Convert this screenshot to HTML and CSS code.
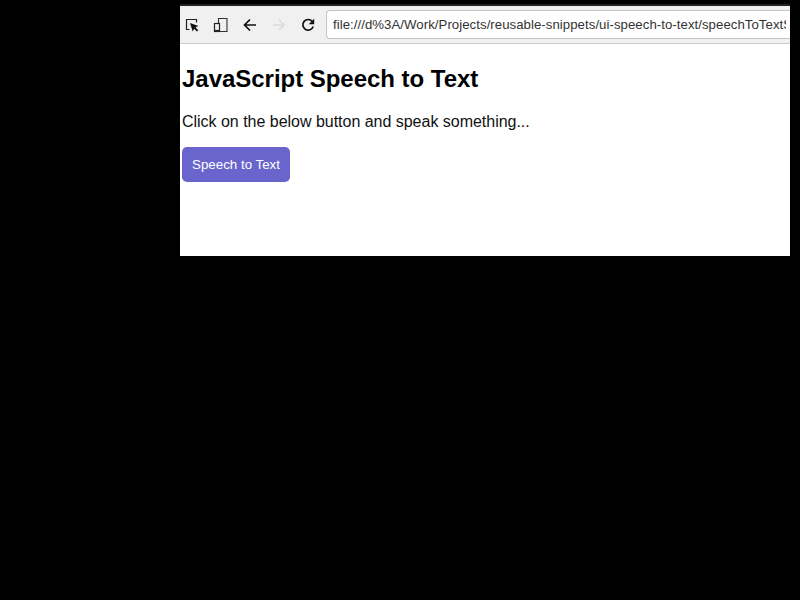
FILE: index.html
```html
<!DOCTYPE html>
<html lang="en">
<head>
<meta charset="utf-8">
<title>JavaScript Speech to Text</title>
<link rel="stylesheet" href="styles.css">
</head>
<body>
<div class="window">
  <header class="toolbar">
    <svg class="icon" viewBox="0 0 16 16"><path d="M5.500 12.500H2.500v-10h10v3" fill="none" stroke="#222" stroke-width="1.200"/><path d="M6 6l8.500 3-3 1.300 2.700 3-1.200 1.200-2.900-2.700-1.400 2.700z" fill="#111"/></svg>
    <svg class="icon" viewBox="0 0 16 16"><path d="M5.500 6V1.500h8.500v13H7" fill="none" stroke="#333" stroke-width="1.100"/><rect x="1.500" y="6.500" width="5" height="8" fill="none" stroke="#222" stroke-width="1.200"/><path d="M1 13.500h6" stroke="#222" stroke-width="1.200"/></svg>
    <svg class="icon" viewBox="0 0 16 16"><path d="M14 8H3M8 2.500L2.500 8L8 13.500" fill="none" stroke="#111" stroke-width="1.700"/></svg>
    <svg class="icon" viewBox="0 0 16 16"><path d="M2 8h11M8 3L13 8L8 13" fill="none" stroke="#dadada" stroke-width="1.600"/></svg>
    <svg class="icon" viewBox="0 0 16 16"><path d="M12.300 4.500A5.300 5.300 0 1 0 13.200 9.500" fill="none" stroke="#111" stroke-width="1.700"/><path d="M14.200 1.800v5.500H8.700z" fill="#111"/></svg>
    <div class="address"><span class="url">file:///d%3A/Work/Projects/reusable-snippets/ui-speech-to-text/speechToTextS</span></div>
  </header>
  <main class="page">
    <h1>JavaScript Speech to Text</h1>
    <p>Click on the below button and speak something...</p>
    <button class="speak" type="button">Speech to Text</button>
  </main>
</div>
</body>
</html>
```
FILE: styles.css
```css
body {
  margin: 0;
  height: 600px;
  overflow: hidden;
  background: #000;
  font-family: "Liberation Sans", Arial, sans-serif;
}
.window {
  box-sizing: border-box;
  width: 610px;
  height: 252px;
  margin: 4px 0 0 180px;
  border-top: 2px solid #231f22;
  background: #fff;
  overflow: hidden;
}
.toolbar {
  box-sizing: border-box;
  display: flex;
  align-items: center;
  height: 38px;
  padding-left: 4px;
  gap: 13px;
  background: #f0f0f0;
  border-bottom: 1px solid #ccc;
}
.icon {
  flex: none;
  width: 16px;
  height: 16px;
}
.address {
  box-sizing: border-box;
  flex: 1;
  min-width: 0;
  height: 29px;
  margin-left: -3px;
  padding: 0 4px 0 6px;
  border: 1px solid #c4c4c4;
  border-right: 0;
  border-radius: 4px 0 0 4px;
  background: #fff;
}
.url {
  display: block;
  overflow: hidden;
  white-space: nowrap;
  font: 13.2px/27px "Liberation Sans", Arial, sans-serif;
  letter-spacing: 0.055px;
  color: #333;
}
.page {
  padding: 21px 2px 0;
}
h1 {
  margin: 0;
  font-size: 24px;
  line-height: 28px;
  letter-spacing: -0.03px;
  color: #000;
}
p {
  margin: 19px 0 16px;
  font-size: 16px;
  line-height: 19px;
  letter-spacing: -0.02px;
  color: #111;
}
.speak {
  display: block;
  width: 108px;
  height: 35px;
  padding: 0;
  border: 0;
  border-radius: 5px;
  background: #6a65cc;
  color: #fff;
  font: 13.33px "Liberation Sans", Arial, sans-serif;
}
```
